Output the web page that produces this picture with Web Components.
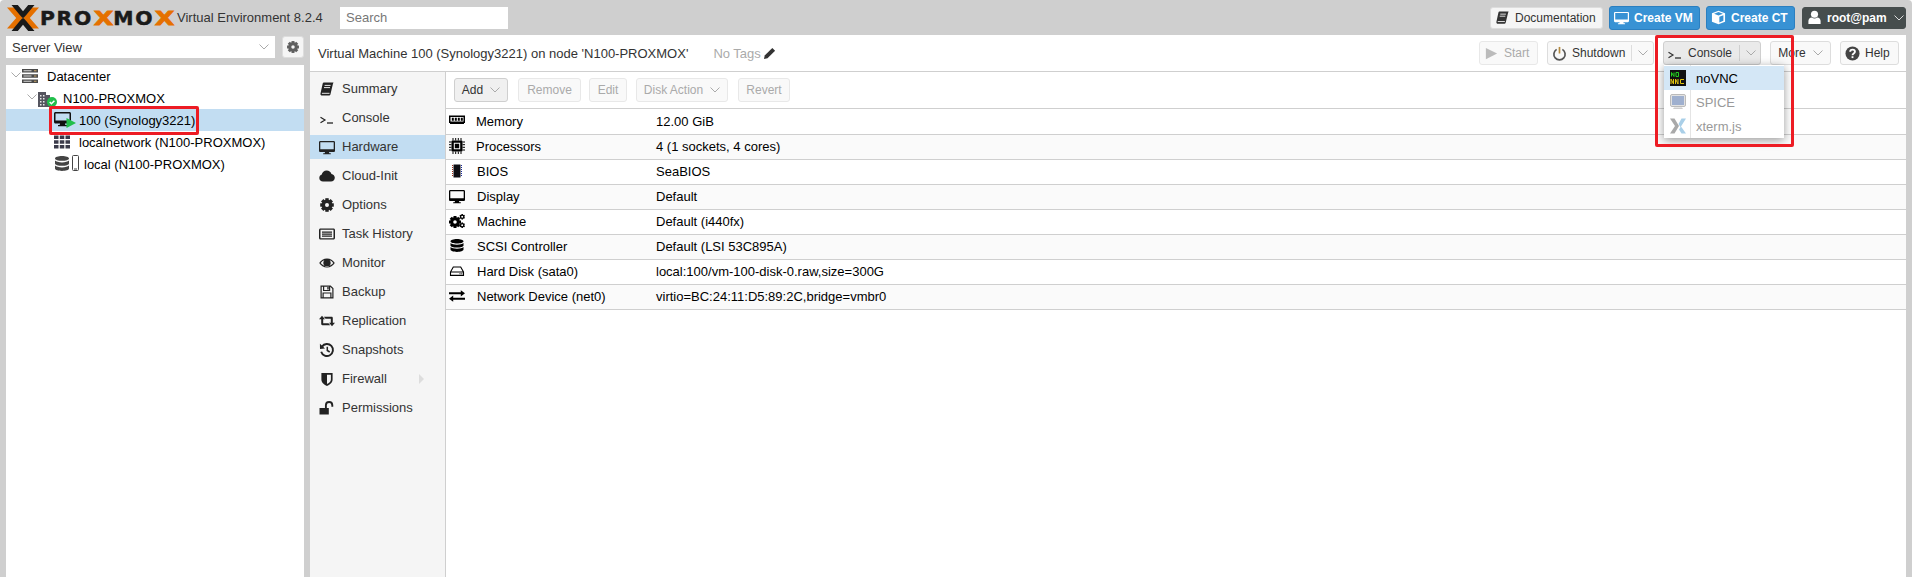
<!DOCTYPE html>
<html>
<head>
<meta charset="utf-8">
<title>Proxmox Virtual Environment</title>
<style>
  html { background: #fff; }
  body { margin: 0; font: 13px "Liberation Sans", Arial, sans-serif; color: #000; overflow: hidden; }
</style>
</head>
<body>
<px-app>
  <px-topbar slot="top">
    <px-button slot="right" icon="book" style="width:113px;margin-right:6px;--h:22px;--bg:#f5f5f5">Documentation</px-button>
    <px-button slot="right" icon="monitor" kind="blue" style="width:91px;margin-right:6px">Create VM</px-button>
    <px-button slot="right" icon="cube" kind="blue" style="width:89px;margin-right:7px">Create CT</px-button>
    <px-button slot="right" icon="user" kind="dark" arrow style="width:104px;--h:22px">root@pam</px-button>
  </px-topbar>
  <px-sidebar slot="side">
    <px-tree-node level="0" icon="datacenter" open>Datacenter</px-tree-node>
    <px-tree-node level="1" icon="node" open>N100-PROXMOX</px-tree-node>
    <px-tree-node level="2" icon="vm" selected marked>100 (Synology3221)</px-tree-node>
    <px-tree-node level="2" icon="sdn">localnetwork (N100-PROXMOX)</px-tree-node>
    <px-tree-node level="2" icon="storage" wide>local (N100-PROXMOX)</px-tree-node>
  </px-sidebar>
  <px-main slot="main">
    <px-titlebar slot="title">
      <px-button slot="actions" icon="play" disabled style="width:59px">Start</px-button>
      <px-button slot="actions" icon="power" split style="width:107px">Shutdown</px-button>
      <px-console slot="actions"></px-console>
      <px-button slot="actions" arrow style="width:61px">More</px-button>
      <px-button slot="actions" icon="help" style="width:59px">Help</px-button>
    </px-titlebar>
    <px-tabs slot="tabs">
      <px-tab icon="book">Summary</px-tab>
      <px-tab icon="term">Console</px-tab>
      <px-tab icon="monitor" active>Hardware</px-tab>
      <px-tab icon="cloud">Cloud-Init</px-tab>
      <px-tab icon="cog">Options</px-tab>
      <px-tab icon="list">Task History</px-tab>
      <px-tab icon="eye">Monitor</px-tab>
      <px-tab icon="floppy">Backup</px-tab>
      <px-tab icon="retweet">Replication</px-tab>
      <px-tab icon="history">Snapshots</px-tab>
      <px-tab icon="shield" more>Firewall</px-tab>
      <px-tab icon="unlock">Permissions</px-tab>
    </px-tabs>
    <px-toolbar slot="toolbar">
      <px-button arrow pressed style="width:54px;margin-right:10px">Add</px-button>
      <px-button disabled style="width:63px;margin-right:8px">Remove</px-button>
      <px-button disabled style="width:38px;margin-right:9px">Edit</px-button>
      <px-button disabled arrow style="width:92px;margin-right:10px">Disk Action</px-button>
      <px-button disabled style="width:52px">Revert</px-button>
    </px-toolbar>
    <px-row slot="rows" icon="memory" value="12.00 GiB" first style="--tx:30px">Memory</px-row>
    <px-row slot="rows" icon="cpu" value="4 (1 sockets, 4 cores)" alt style="--tx:30px">Processors</px-row>
    <px-row slot="rows" icon="bios" value="SeaBIOS">BIOS</px-row>
    <px-row slot="rows" icon="monitor" value="Default" alt>Display</px-row>
    <px-row slot="rows" icon="gears" value="Default (i440fx)">Machine</px-row>
    <px-row slot="rows" icon="database" value="Default (LSI 53C895A)" alt>SCSI Controller</px-row>
    <px-row slot="rows" icon="hdd" value="local:100/vm-100-disk-0.raw,size=300G">Hard Disk (sata0)</px-row>
    <px-row slot="rows" icon="exchange" value="virtio=BC:24:11:D5:89:2C,bridge=vmbr0" alt>Network Device (net0)</px-row>
  </px-main>
</px-app>

<script>
// icon set, all on a 16x16 box, colour comes from currentColor
const gear = (cx, cy, r, hole, n) => {
  let d = '';
  const w = r * 0.5;
  for (let i = 0; i < n; i++) {
    d += `<rect x="${cx - w / 2}" y="${cy - r}" width="${w}" height="${r * 0.5}" transform="rotate(${i * 360 / n} ${cx} ${cy})"/>`;
  }
  const outer = r * 0.8;
  return `<g fill="currentColor">${d}</g><circle cx="${cx}" cy="${cy}" r="${(outer + hole) / 2}" fill="none" stroke="currentColor" stroke-width="${outer - hole}"/>`;
};
const ICONS = {
  book: '<path fill="currentColor" d="M5 1.500h9.500l-.6 1.600L11.400 13.600c-.2.7-.6 1-1.300 1H3.200c-1.200 0-2-.9-1.700-2.200L3.600 3C3.800 2 4.200 1.500 5 1.500z"/><path fill="none" stroke="#fff" stroke-width=".9" d="M5.600 4.400h6M5 6.600h6M2.900 12.300h7.600"/>',
  term: '<path fill="none" stroke="currentColor" stroke-width="1.200" d="M1.500 7.200 6 10l-4.500 2.800"/><path fill="none" stroke="currentColor" stroke-width="1.300" d="M8 13h6"/>',
  monitor: '<path fill="currentColor" fill-rule="evenodd" d="M1.300 2h13.400c.7 0 1.300.6 1.300 1.300v8.400c0 .7-.6 1.300-1.300 1.300H10l.3 1.200h1.500v1H4.200v-1h1.500L6 13H1.300C.6 13 0 12.400 0 11.700V3.300C0 2.600.6 2 1.300 2zM1.300 3.300v6.900h13.400V3.300z"/>',
  cloud: '<path fill="currentColor" d="M4 13.500c-2.100 0-3.700-1.500-3.700-3.500 0-1.600 1-2.900 2.500-3.400C3.100 4.200 5.100 2.500 7.700 2.500c2.300 0 4.100 1.400 4.800 3.400 1.900.2 3.300 1.800 3.300 3.800 0 2.100-1.700 3.800-3.800 3.800z"/>',
  cog: gear(8, 8, 6.800, 2, 8),
  list: '<path fill="currentColor" fill-rule="evenodd" d="M1.500 2.500h13c.8 0 1.500.7 1.500 1.500v8c0 .8-.7 1.500-1.500 1.500h-13C.7 13.500 0 12.800 0 12V4c0-.8.7-1.500 1.500-1.500zm0 1.300V12.200h13V3.800zM3 5.500h10v1.200H3zM3 7.500h10v1.200H3zM3 9.500h10v1.200H3z"/>',
  eye: '<path fill="currentColor" fill-rule="evenodd" d="M8 3.500c3.300 0 6.200 1.800 7.800 4.500-1.600 2.700-4.500 4.500-7.800 4.500S1.800 10.700.2 8C1.800 5.300 4.700 3.500 8 3.500zM1.700 8c1.400 1.900 3.700 3.300 6.300 3.300s4.900-1.400 6.300-3.300C13.400 6.700 12.200 5.700 10.700 5.200c.6.700 1 1.700 1 2.800 0 2-1.600 3.700-3.700 3.700S4.300 10 4.300 8c0-1.100.4-2.100 1-2.800C3.800 5.700 2.600 6.700 1.700 8z"/>',
  floppy: '<path fill="none" stroke="currentColor" stroke-width="1.200" d="M2.100 2.100h9.300l2.500 2.500v9.300H2.100zM4.600 2.100v4.400h6V2.100M4.100 13.900V9h7.800v4.900"/><path fill="currentColor" d="M8.300 3h1.400v2.600H8.300z"/>',
  retweet: '<path fill="currentColor" d="M0 6.200 3 2.800l3 3.400H4.200v4h5.300l1.700 2H3.400c-.7 0-1.200-.4-1.200-1.200V6.200zM16 9.800l-3 3.400-3-3.400h1.800v-4H6.500l-1.700-2h7.800c.7 0 1.200.4 1.200 1.200v4.800z"/>',
  history: '<path fill="none" stroke="currentColor" stroke-width="1.900" d="M3 4.600A6 6 0 1 1 2.200 9.700"/><path fill="currentColor" d="M.9 1.700 6 6.600 1 7z"/><path fill="none" stroke="currentColor" stroke-width="1.500" d="M8.300 4.800v3.700l2.400 1.500"/>',
  shield: '<path fill="currentColor" fill-rule="evenodd" d="M2.400 2h11.200v6.500c0 3.300-3 5.400-5.600 6.500-2.600-1.100-5.600-3.200-5.600-6.500zM8 3.700v9.400c1.900-.9 3.900-2.400 3.900-4.600V3.700z"/>',
  unlock: '<path fill="currentColor" d="M.5 8h9.300v6.500H.5z"/><path fill="none" stroke="currentColor" stroke-width="1.900" d="M6.900 8V5.300c0-1.900 1.400-3.300 3.200-3.300s3.200 1.400 3.200 3.300v1.500"/>',
  memory: '<path fill="currentColor" fill-rule="evenodd" d="M0 3.500h16v7.500H15v1H1v-1H0zm1.500 1.500v4.500h13V5zM2.800 5.800h2v3h-2zM5.800 5.800h2v3h-2zM8.800 5.800h2v3h-2zM11.800 5.800h2v3h-2z"/>',
  cpu: '<path fill="currentColor" fill-rule="evenodd" d="M3.500 2.500h9c.6 0 1 .4 1 1v9c0 .6-.4 1-1 1h-9c-.6 0-1-.4-1-1v-9c0-.6.4-1 1-1zM4.800 4.800v6.400h6.400V4.800zM5.800 5.800h4.400v4.400H5.800z"/><path fill="none" stroke="currentColor" stroke-width="1" d="M4 0v2.500M6.700 0v2.500M9.300 0v2.500M12 0v2.500M4 13.500V16M6.700 13.500V16M9.300 13.500V16M12 13.500V16M0 4h2.500M0 6.700h2.500M0 9.300h2.500M0 12h2.500M13.500 4H16M13.500 6.700H16M13.500 9.300H16M13.500 12H16"/>',
  bios: '<path fill="#0d0d12" d="M4.500 1.500h7v13h-7z"/><path fill="none" stroke="#a03018" stroke-width="1" stroke-dasharray="1 1" d="M3.500 2v12"/><path fill="none" stroke="#1a2a9a" stroke-width="1" stroke-dasharray="1 1" d="M12.500 2v12"/>',
  gears: gear(6, 9, 6, 1.800, 8) + gear(13.200, 3.800, 2.800, 1, 6) + gear(13.200, 12.200, 2.800, 1, 6),
  database: '<path fill="currentColor" d="M8 1c3.600 0 6.500 1 6.500 2.300S11.600 5.600 8 5.600 1.500 4.600 1.500 3.300 4.400 1 8 1zM1.500 5.100C2.600 6.300 5.200 6.800 8 6.800s5.400-.5 6.500-1.700v2.300C14.500 8.600 11.600 9.600 8 9.600S1.500 8.600 1.500 7.400zM1.500 9.100c1.100 1.200 3.700 1.700 6.500 1.700s5.400-.5 6.500-1.700v2.500c0 1.300-2.900 2.400-6.500 2.400s-6.500-1.100-6.500-2.400z"/>',
  hdd: '<path fill="none" stroke="currentColor" stroke-width="1.100" d="M1.500 9 4.300 4h7.400l2.800 5v3.400h-13zM1.500 9h13"/><path fill="currentColor" d="M10.500 10.200h1v1h-1zM12.300 10.200h1v1h-1z"/>',
  exchange: '<path fill="currentColor" d="M0 4.300h11.800V2.200L16 5.300l-4.200 3.100V6.300H0zM16 9.700H4.200V7.600L0 10.700l4.200 3.100v-2.100H16z"/>',
  play: '<path fill="currentColor" d="M2 2l12 6-12 6z"/>',
  power: '<path fill="none" stroke="#555" stroke-width="1.800" d="M4.900 3.600a6 6 0 1 0 6.200 0"/><path fill="none" stroke="#b58a3e" stroke-width="1.800" d="M8 1v7"/>',
  help: '<circle cx="8" cy="8" r="7.500" fill="#444"/><path fill="none" stroke="#fff" stroke-width="2" d="M5.500 6.200c0-1.500 1.100-2.300 2.600-2.300s2.500.9 2.500 2.100c0 2-2.600 1.900-2.600 3.800"/><path fill="#fff" d="M7 10.900h2v2H7z"/>',
  cube: '<path fill="currentColor" d="M8 .7 15 3.500v9L8 15.300 1 12.500v-9zM3.300 4 8 5.900 12.700 4 8 2.100zM8.900 7.300v5.900l4.300-1.700V5.600z"/>',
  user: '<circle cx="8" cy="4.500" r="3.800" fill="currentColor"/><path fill="currentColor" d="M1.500 15v-3.200c0-2.200 1.500-3.800 3.500-3.800.9.700 1.900 1 3 1s2.100-.3 3-1c2 0 3.500 1.600 3.500 3.800V15z"/>',
  datacenter: '<path fill="#4a4a4a" d="M0 1h16v3.500H0zM0 6.200h16v3.500H0zM0 11.500h16V15H0z"/><path fill="#d8d8d8" d="M1.500 2.200h8v1h-8zM1.500 7.400h8v1h-8zM1.500 12.700h8v1h-8z"/><path fill="#c9a56a" d="M12 2.200h2.500v1H12zM12 7.400h2.500v1H12zM12 12.700h2.500v1H12z"/>',
  sdn: '<path fill="#3a3a4a" d="M0 1.500h4.500v3.600H0zM5.800 1.500h4.500v3.600H5.800zM11.500 1.500H16v3.600h-4.500zM0 6.200h4.500v3.600H0zM5.800 6.200h4.500v3.600H5.800zM11.500 6.200H16v3.600h-4.500zM0 11h4.500v3.600H0zM5.800 11h4.500v3.600H5.800zM11.500 11H16v3.600h-4.500z"/>'
};
const svg = (name, size = 16) => `<svg width="${size}" height="${size}" viewBox="0 0 16 16">${ICONS[name] || ''}</svg>`;
const CHEVRON = '<svg class="chev" width="10" height="6" viewBox="0 0 10 6"><path fill="none" stroke="currentColor" d="M.5.5 5 5 9.500.5"/></svg>';

class PxApp extends HTMLElement {
  constructor() {
    super();
    this.attachShadow({ mode: 'open' });
    this.shadowRoot.innerHTML = `
      <style>
        :host { display: grid; grid-template-columns: 298px 1fr; grid-template-rows: 35px 542px; column-gap: 6px;
                height: 577px; padding: 0 6px; box-sizing: border-box; background: #cfcfcf; border-radius: 4px 4px 0 0; }
        ::slotted([slot=top]) { grid-column: 1 / 3; }
      </style>
      <slot name="top"></slot>
      <slot name="side"></slot>
      <slot name="main"></slot>`;
  }
}

class PxTopbar extends HTMLElement {
  constructor() {
    super();
    this.attachShadow({ mode: 'open' });
    this.shadowRoot.innerHTML = `
      <style>
        :host { display: flex; align-items: center; height: 35px; margin-left: -6px; }
        .logo { display: flex; align-items: center; margin-left: 7px; width: 169px; flex: none; }
        .logo svg { flex: none; }
        .word { font: bold 19px "DejaVu Sans", sans-serif; color: #1a1a1a; letter-spacing: 1.6px; margin-left: 1px;
                display: flex; align-items: center; white-space: nowrap; -webkit-text-stroke: .5px #1a1a1a;
                transform: scaleX(1.07); transform-origin: left center; }
        .word b { display: inline-block; color: #e57000; -webkit-text-stroke: .8px #e57000; width: 19px; text-align: center;
                  transform: scaleX(1.25); letter-spacing: 0; }
        .ver { margin-left: 1px; color: #333; font-size: 13px; white-space: nowrap; width: 163px; }
        input { width: 168px; height: 22px; box-sizing: border-box; border: 0; padding: 0 6px; font: 13px "Liberation Sans", sans-serif; background: #fff; }
        input::placeholder { color: #777; opacity: 1; }
        .right { margin-left: auto; display: flex; align-items: center; }
      </style>
      <div class="logo">
        <svg width="32" height="26" viewBox="0 0 32 26">
          <path fill="#e57000" d="M0 2.500h7.500l9 10.500-9 10.500H0L9.200 13zM32 2.500h-7.500l-9 10.500 9 10.500H32L22.800 13z"/>
          <path fill="#1a1a1a" d="M4.500 0h6.300L16 6.300 21.200 0h6.300l-8.300 10L16 13.500 12.800 10zM4.500 26h6.300L16 19.700l5.200 6.300h6.300l-8.300-10L16 12.500 12.800 16z"/>
        </svg>
        <span class="word">PRO<b>X</b>MO<b>X</b></span>
      </div>
      <span class="ver">Virtual Environment 8.2.4</span>
      <input placeholder="Search">
      <div class="right"><slot name="right"></slot></div>`;
  }
}

class PxSidebar extends HTMLElement {
  constructor() {
    super();
    this.attachShadow({ mode: 'open' });
    this.shadowRoot.innerHTML = `
      <style>
        :host { display: flex; flex-direction: column; }
        .head { display: flex; justify-content: space-between; height: 22px; margin-top: 1px; margin-bottom: 7px; }
        .combo { width: 269px; background: #fff; display: flex; align-items: center; justify-content: space-between;
                 padding: 0 6px; box-sizing: border-box; color: #333; }
        .chev { color: #aaa; }
        .gear { width: 22px; background: #f5f5f5; border: 1px solid #ddd; box-sizing: border-box; border-radius: 3px;
                display: flex; align-items: center; justify-content: center; color: #5f5f5f; }
        .tree { flex: 1; background: #fff; }
        svg { display: block; }
      </style>
      <div class="head">
        <div class="combo"><span>Server View</span>${CHEVRON}</div>
        <div class="gear">${svg('cog', 14)}</div>
      </div>
      <div class="tree"><slot></slot></div>`;
  }
}

class PxTreeNode extends HTMLElement {
  constructor() {
    super();
    this.attachShadow({ mode: 'open' });
  }
  connectedCallback() {
    const level = +this.getAttribute('level');
    const icon = this.getAttribute('icon');
    let art = ICONS[icon] ? svg(icon) : '';
    if (icon === 'node') {
      art = `<svg width="20" height="18" viewBox="0 0 20 18" style="margin-top:2px">
        <path fill="#55555f" d="M0 2h8v3h4v12H0z"/>
        <path fill="#e8e8e8" d="M2 5h1.500v1.500H2zM5 5h1.500v1.500H5zM2 8h1.500v1.500H2zM5 8h1.500v1.500H5zM2 11h1.500v1.500H2zM5 11h1.500v1.500H5zM2 14h1.500v1.500H2zM5 14h1.500v1.500H5z"/>
        <circle cx="14" cy="12" r="5" fill="#21bf4b"/><path fill="none" stroke="#fff" stroke-width="1.500" d="M11.700 12l1.700 1.700 3-3"/></svg>`;
    }
    if (icon === 'vm') {
      art = `<svg width="22" height="20" viewBox="0 0 22 20">
        <path fill="#111" fill-rule="evenodd" d="M1.500 2h14c.8 0 1.500.7 1.500 1.500V12c0 .8-.7 1.500-1.500 1.500H11l.3 1.500h1.700v1.200H4v-1.200h1.700l.3-1.500H1.500C.7 13.500 0 12.800 0 12V3.500C0 2.700.7 2 1.500 2zm0 1.500V10.500h14V3.500z"/>
        <path fill="#21bf4b" d="M12.500 8 22 13l-9.500 5z"/></svg>`;
    }
    if (icon === 'storage') {
      art = `<svg width="26" height="18" viewBox="0 0 26 18" style="color:#444">
        <path fill="currentColor" d="M8 1c3.900 0 7 1 7 2.400S11.900 5.800 8 5.800 1 4.800 1 3.400 4.100 1 8 1zM1 5.600c1.100 1.200 3.900 1.800 7 1.800s5.900-.6 7-1.800v2.800c0 1.400-3.100 2.400-7 2.400S1 9.800 1 8.400zM1 10.600c1.100 1.200 3.900 1.800 7 1.800s5.900-.6 7-1.800v3c0 1.400-3.100 2.400-7 2.400S1 15 1 13.600z"/>
        <rect x="18.500" y=".5" width="6" height="15" rx="1" fill="none" stroke="currentColor"/><path fill="currentColor" d="M20 13.500h3v1h-3z"/></svg>`;
    }
    const expander = this.hasAttribute('open') ? CHEVRON : '';
    // tree offsets per level: arrow column + icon column
    const pad = [5, 21, 48][level];
    const gap = { datacenter: 9, node: 5, vm: 3, sdn: 9, storage: 4 }[icon];
    this.shadowRoot.innerHTML = `
      <style>
        :host { display: flex; align-items: center; height: 22px; position: relative; white-space: nowrap; color: #000;
                background: ${this.hasAttribute('selected') ? '#c2ddf2' : 'transparent'}; }
        .exp { width: 10px; color: #aaa; margin-right: 1px; display: ${expander ? 'block' : 'none'}; margin-top: -2px; }
        .pad { width: ${pad}px; flex: none; }
        svg { display: block; }
        .ic { display: block; flex: none; margin-right: ${gap}px; }
        .mark { position: absolute; left: 43px; top: -3px; width: 150px; height: 29px; box-sizing: border-box;
                border: 3px solid #ed1c24; border-radius: 2px; }
      </style>
      <div class="pad"></div>
      <div class="exp">${expander}</div>
      <div class="ic">${art}</div>
      <span><slot></slot></span>
      ${this.hasAttribute('marked') ? '<div class="mark"></div>' : ''}`;
  }
}

class PxMain extends HTMLElement {
  constructor() {
    super();
    this.attachShadow({ mode: 'open' });
    this.shadowRoot.innerHTML = `
      <style>
        :host { display: grid; grid-template-columns: 135px 1fr; grid-template-rows: 37px 1fr; background: #fff; }
        ::slotted([slot=title]) { grid-column: 1 / 3; }
        .content { display: flex; flex-direction: column; min-width: 0; border-left: 1px solid #cfcfcf; }
      </style>
      <slot name="title"></slot>
      <slot name="tabs"></slot>
      <div class="content">
        <slot name="toolbar"></slot>
        <slot name="rows"></slot>
      </div>`;
  }
}

class PxTitlebar extends HTMLElement {
  constructor() {
    super();
    this.attachShadow({ mode: 'open' });
    this.shadowRoot.innerHTML = `
      <style>
        :host { display: flex; align-items: center; height: 37px; box-sizing: border-box; border-bottom: 1px solid #cfcfcf;
                padding: 0 7px 0 8px; position: relative; z-index: 2; }
        .title { color: #333; white-space: nowrap; }
        .tags { color: #aaa; margin-left: 25px; display: flex; align-items: center; gap: 3px; }
        .tags svg { color: #333; }
        .actions { margin-left: auto; display: flex; gap: 9px; }
      </style>
      <span class="title">Virtual Machine 100 (Synology3221) on node 'N100-PROXMOX'</span>
      <span class="tags">No Tags
        <svg width="12" height="12" viewBox="0 0 12 12"><path fill="currentColor" d="M8.300.9 11.100 3.700 3.500 11.300 0 12l.7-3.500z"/></svg>
      </span>
      <div class="actions"><slot name="actions"></slot></div>`;
  }
}

class PxButton extends HTMLElement {
  constructor() {
    super();
    this.attachShadow({ mode: 'open' });
  }
  connectedCallback() {
    const icon = this.getAttribute('icon');
    const kind = this.getAttribute('kind');
    const off = this.hasAttribute('disabled');
    const split = this.hasAttribute('split');
    const arrow = this.hasAttribute('arrow') || split;
    const colors = kind === 'blue'
      ? 'background:#3892d4;border-color:#2b7fc0;color:#fff;font-weight:bold;'
      : kind === 'dark'
        ? 'background:#464d4d;border-color:#464d4d;color:#fff;font-weight:bold;'
        : this.hasAttribute('pressed')
          ? 'background:#f0f0f0;border-color:#cfcfcf;color:#333;'
          : off
            ? 'background:#f9f9f9;border-color:#e8e8e8;color:#aaa;'
            : 'background:var(--bg,#f9f9f9);border-color:#ddd;color:#333;';
    // buttons with an icon start from the left, plain ones centre their text
    this.shadowRoot.innerHTML = `
      <style>
        :host { display: inline-block; flex: none; }
        .b { display: flex; align-items: center; justify-content: ${icon ? 'flex-start' : 'center'}; box-sizing: border-box; height: var(--h, 24px);
             border: 1px solid; border-radius: 3px; padding: 0 4px; font-size: 12px; white-space: nowrap; ${colors} }
        .i { display: block; margin-right: 5px; flex: none; }
        .i svg { display: block; }
        .sep { width: 1px; align-self: stretch; margin: 3px 6px; background: #ddd; }
        .chev { margin-left: ${split ? 0 : 7}px; color: ${kind === 'dark' ? '#ddd' : '#aaa'}; flex: none; }
        ${off && icon ? '.i { color: #bbb; }' : ''}
      </style>
      <div class="b">
        ${icon ? `<span class="i">${svg(icon, 15)}</span>` : ''}
        <span class="t"><slot></slot></span>
        ${split ? '<span class="sep"></span>' : ''}
        ${arrow ? CHEVRON : ''}
      </div>`;
  }
}

// console split button with its open menu laid over the panel
class PxConsole extends HTMLElement {
  constructor() {
    super();
    this.attachShadow({ mode: 'open' });
    this.shadowRoot.innerHTML = `
      <style>
        :host { display: block; position: relative; width: 98px; height: 24px; }
        .b { display: flex; align-items: center; height: 24px; box-sizing: border-box; border: 1px solid #cfcfcf; border-radius: 3px;
             background: #eaeaea; color: #333; padding-left: 3px; font-size: 12px; }
        .b svg.t { margin-right: 5px; }
        .sep { width: 1px; align-self: stretch; margin: 3px 6px 3px 7px; background: #cfcfcf; }
        .chev { color: #aaa; }
        .menu { position: absolute; left: 1px; top: 24px; width: 120px; height: 73px; background: #fff; padding-top: 1px; box-sizing: border-box;
                box-shadow: 0 2px 9px rgba(0,0,0,.4); z-index: 3; }
        .menu::before { content: ""; position: absolute; left: 26px; top: 0; bottom: 0; width: 1px; background: #e4e4e4; }
        .it { display: flex; align-items: center; height: 24px; position: relative; color: #000; }
        .it.on { background: #d4e7f6; }
        .it.off { color: #999; }
        .it svg { display: block; margin: 0 10px 0 6px; flex: none; }
        .mark { position: absolute; left: -8px; top: -6px; width: 139px; height: 112px; box-sizing: border-box;
                border: 3px solid #ed1c24; border-radius: 2px; z-index: 4; }
      </style>
      <div class="b">
        <svg class="t" width="16" height="16" viewBox="0 0 16 16">${ICONS.term}</svg>
        <span>Console</span><span class="sep"></span>${CHEVRON}
      </div>
      <div class="menu">
        <div class="it on">
          <svg width="16" height="16" viewBox="0 0 16 16">
            <rect width="16" height="16" fill="#111"/>
            <path fill="none" stroke="#22d31f" stroke-width="1" d="M1.500 6.500v-4l2.500 4v-4M6 2.500h2.500v4H6z"/>
            <path fill="none" stroke="#e4c40c" stroke-width="1" d="M1 14v-5l2.500 5V9M5.500 14V9L8 14V9M14 9.500h-3.500v4H14"/>
          </svg><span>noVNC</span>
        </div>
        <div class="it off">
          <svg width="16" height="16" viewBox="0 0 16 16">
            <rect x=".5" y=".5" width="15" height="12" rx="1.500" fill="#e2e2e2" stroke="#bbb"/>
            <rect x="2" y="2" width="12" height="9" fill="#9fb0cf"/>
            <path fill="#ccc" d="M4 13.500h8l1 1.500H3z"/>
          </svg><span>SPICE</span>
        </div>
        <div class="it off">
          <svg width="16" height="16" viewBox="0 0 16 16">
            <path fill="#a9a9a9" d="M0 .5h4.500L9 8l-4.500 7.500H0L5 8z"/>
            <path fill="#a9cfe8" d="M16 .5h-4.500L8.500 6l2 3.200zM16 15.500h-4.500L9 11.500l2-3z"/>
          </svg><span>xterm.js</span>
        </div>
      </div>
      <div class="mark"></div>`;
  }
}

class PxTabs extends HTMLElement {
  constructor() {
    super();
    this.attachShadow({ mode: 'open' });
    this.shadowRoot.innerHTML = `
      <style>
        :host { display: flex; flex-direction: column; gap: 5px; padding-top: 5px; background: #f5f5f5; }
      </style>
      <slot></slot>`;
  }
}

class PxTab extends HTMLElement {
  constructor() {
    super();
    this.attachShadow({ mode: 'open' });
  }
  connectedCallback() {
    this.shadowRoot.innerHTML = `
      <style>
        :host { display: flex; align-items: center; height: 24px; color: #333; position: relative;
                background: ${this.hasAttribute('active') ? '#c2ddf2' : 'transparent'}; }
        .i { width: 32px; padding-left: 9px; box-sizing: border-box; flex: none; color: #222; }
        .i svg { display: block; }
        .more { position: absolute; left: 109px; top: 7px; width: 0; height: 0; border-left: 5px solid #ddd;
                border-top: 5px solid transparent; border-bottom: 5px solid transparent; }
      </style>
      <span class="i">${svg(this.getAttribute('icon'))}</span>
      <span style="margin-top:-2px"><slot></slot></span>
      ${this.hasAttribute('more') ? '<span class="more"></span>' : ''}`;
  }
}

class PxToolbar extends HTMLElement {
  constructor() {
    super();
    this.attachShadow({ mode: 'open' });
    this.shadowRoot.innerHTML = `
      <style>
        :host { display: flex; align-items: center; height: 37px; box-sizing: border-box; padding: 0 0 1px 8px; border-bottom: 1px solid #cfcfcf; }
      </style>
      <slot></slot>`;
  }
}

class PxRow extends HTMLElement {
  constructor() {
    super();
    this.attachShadow({ mode: 'open' });
  }
  connectedCallback() {
    const h = this.hasAttribute('first') ? 26 : 25;
    this.shadowRoot.innerHTML = `
      <style>
        :host { display: flex; align-items: center; height: ${h}px; box-sizing: border-box; border-bottom: 1px solid #cfcfcf;
                background: ${this.hasAttribute('alt') ? '#fafafa' : '#fff'}; white-space: nowrap; }
        .i { width: var(--tx, 31px); padding-left: 3px; box-sizing: border-box; flex: none; color: #000; margin-top: -3px; }
        .i svg { display: block; }
        .n { width: calc(210px - var(--tx, 31px)); flex: none; margin-top: -1px; }
        .v { margin-top: -1px; }
      </style>
      <span class="i">${svg(this.getAttribute('icon'))}</span>
      <span class="n"><slot></slot></span>
      <span class="v">${this.getAttribute('value')}</span>`;
  }
}

customElements.define('px-app', PxApp);
customElements.define('px-topbar', PxTopbar);
customElements.define('px-sidebar', PxSidebar);
customElements.define('px-tree-node', PxTreeNode);
customElements.define('px-main', PxMain);
customElements.define('px-titlebar', PxTitlebar);
customElements.define('px-button', PxButton);
customElements.define('px-console', PxConsole);
customElements.define('px-tabs', PxTabs);
customElements.define('px-tab', PxTab);
customElements.define('px-toolbar', PxToolbar);
customElements.define('px-row', PxRow);
</script>
</body>
</html>
